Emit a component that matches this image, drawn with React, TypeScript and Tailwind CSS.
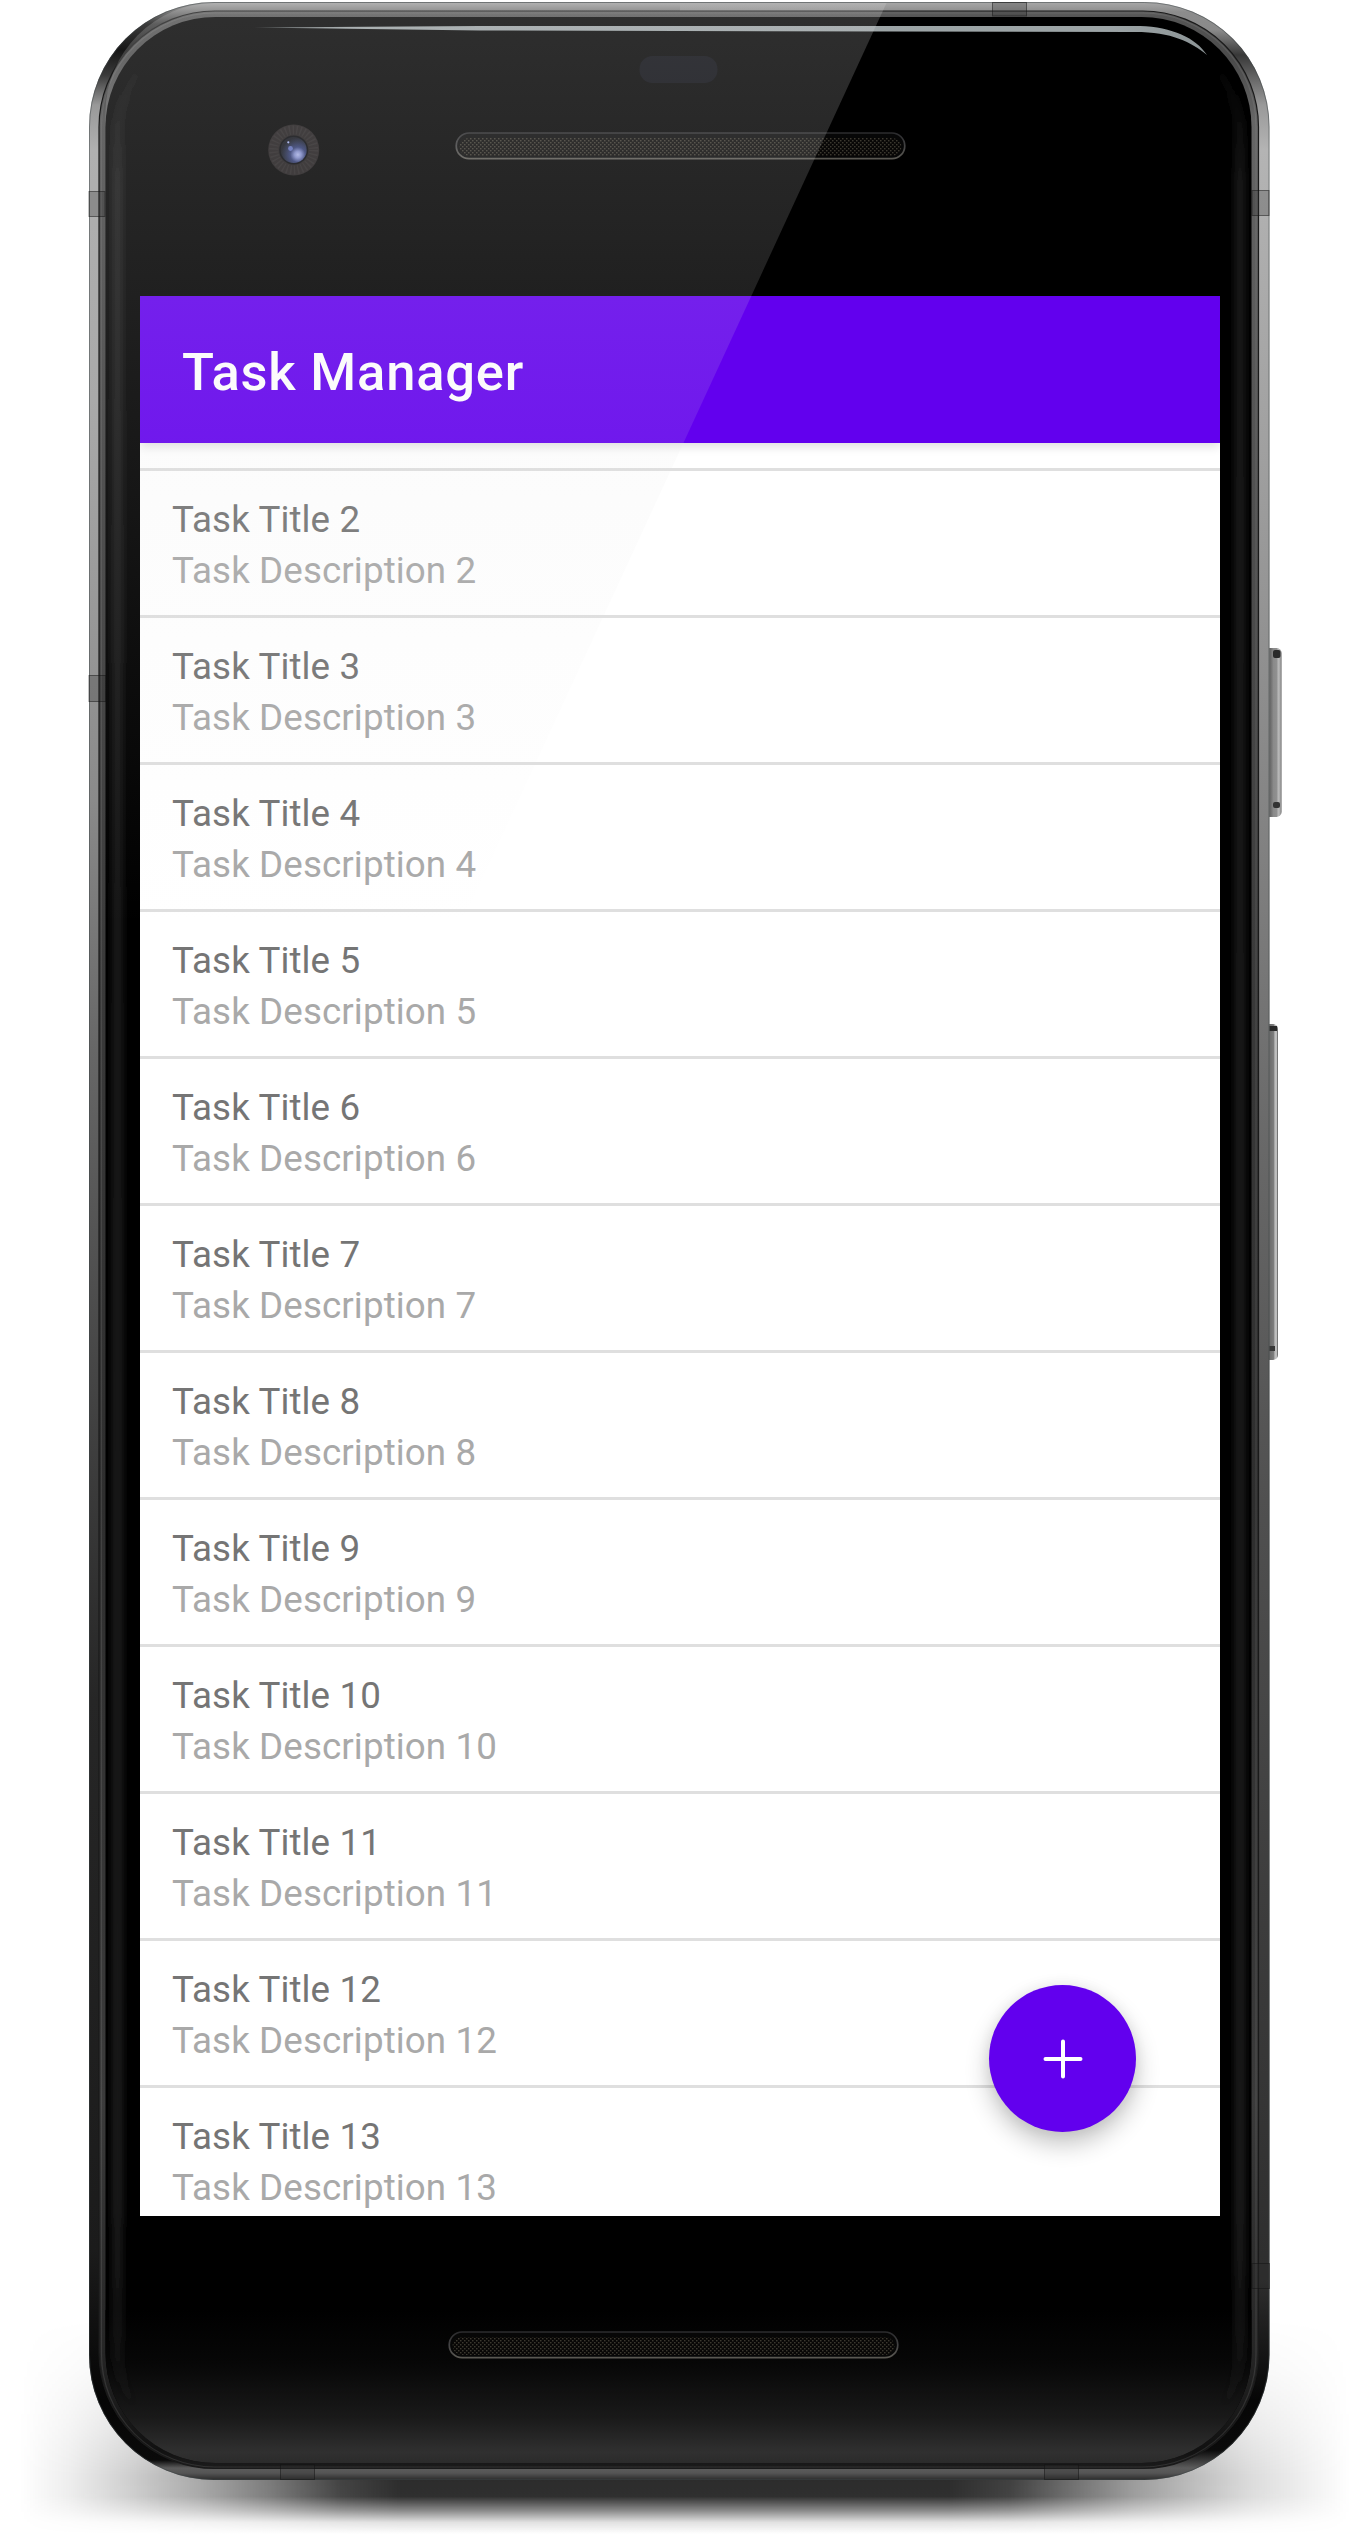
const tasks = Array.from({ length: 12 }, (_, i) => i + 2);

function Stops({ items }: { items: [number, string, number?][] }) {
  return (
    <>
      {items.map(([offset, color, opacity], i) => (
        <stop key={i} offset={offset} stopColor={color} stopOpacity={opacity ?? 1} />
      ))}
    </>
  );
}

const yStops = (list: [number, string, number?][]): [number, string, number?][] =>
  list.map(([y, c, o]) => [y / 2534, c, o]);
const xStops = (list: [number, number][]): [number, string, number?][] =>
  list.map(([x, o]) => [x / 1370, "#000", o]);

function Grille({ x, y }: { x: number; y: number }) {
  return (
    <g>
      <rect x={x + 0.75} y={y + 0.5} width="448.5" height="25.7" rx="12.8" fill="#070707" stroke="url(#grilleEdge)" strokeWidth="1.7" />
      <rect x={x + 4} y={y + 5.5} width="442" height="18" rx="9" fill="url(#mesh)" />
    </g>
  );
}

function PhoneBody() {
  return (
    <svg className="absolute inset-0" width="1370" height="2534" viewBox="0 0 1370 2534" aria-hidden="true">
      <defs>
        <linearGradient id="leftMetal" gradientUnits="userSpaceOnUse" x1="0" y1="0" x2="0" y2="2534">
          <Stops items={yStops([[2, "#a8a8a8"], [8, "#8c8c8c"], [24, "#3c3c3c"], [50, "#161616"], [75, "#3a3a3a"], [105, "#999"], [150, "#b0b0b0"], [400, "#a9a9a9"], [800, "#8a8a8a"], [1050, "#676767"], [1350, "#484848"], [1700, "#262626"], [2250, "#1b1b1b"], [2400, "#050505"], [2460, "#0a0a0a"], [2468, "#5c5c5c"], [2473, "#555"], [2480, "#2b2b2b"]])} />
        </linearGradient>
        <linearGradient id="rightMetal" gradientUnits="userSpaceOnUse" x1="0" y1="0" x2="0" y2="2534">
          <Stops items={yStops([[2, "#a8a8a8"], [12, "#8c8c8c"], [30, "#8a8a8a"], [55, "#383838"], [75, "#606060"], [105, "#999"], [150, "#b4b4b4"], [450, "#a0a0a0"], [800, "#858585"], [1150, "#686868"], [1500, "#505050"], [1900, "#3d3d3d"], [2280, "#2e2e2e"], [2400, "#060606"], [2450, "#0a0a0a"], [2468, "#5c5c5c"], [2473, "#555"], [2480, "#2b2b2b"]])} />
        </linearGradient>
        <linearGradient id="rim" gradientUnits="userSpaceOnUse" x1="0" y1="0" x2="0" y2="2534">
          <Stops items={yStops([[10, "#606060"], [17, "#555"], [60, "#4a4a4a"], [120, "#666"], [500, "#505050"], [1000, "#393939"], [1500, "#2e2e2e"], [2100, "#3b3b3b"], [2350, "#262626"], [2450, "#111"], [2468, "#1c1c1c"]])} />
        </linearGradient>
        <linearGradient id="sheen" gradientUnits="userSpaceOnUse" x1="0" y1="0" x2="0" y2="2534">
          <Stops items={yStops([[60, "#2a2a2a", 0], [190, "#2a2a2a", 0.9], [2200, "#2a2a2a", 1], [2340, "#2a2a2a", 0.6], [2410, "#2a2a2a", 0]])} />
        </linearGradient>
        <linearGradient id="chin" gradientUnits="userSpaceOnUse" x1="0" y1="2310" x2="0" y2="2463">
          <Stops items={[[0, "#000"], [0.35, "#070707"], [0.7, "#191919"], [0.93, "#303030"], [1, "#2b2b2b"]]} />
        </linearGradient>
        <linearGradient id="shadowX" gradientUnits="userSpaceOnUse" x1="0" y1="0" x2="1370" y2="0">
          <Stops items={xStops([[20, 0], [70, 0.07], [130, 0.19], [200, 0.34], [270, 0.52], [340, 0.74], [400, 0.83], [950, 0.83], [1010, 0.75], [1060, 0.6], [1130, 0.4], [1180, 0.29], [1250, 0.14], [1350, 0]])} />
        </linearGradient>
        <linearGradient id="shadowY" gradientUnits="userSpaceOnUse" x1="0" y1="2300" x2="0" y2="2534">
          <Stops items={[[0.08, "#fff", 0], [0.3, "#fff", 0.2], [0.55, "#fff", 0.6], [0.75, "#fff", 1], [0.84, "#fff", 0.98], [0.9, "#fff", 0.55], [0.95, "#fff", 0.14], [1, "#fff", 0]]} />
        </linearGradient>
        <mask id="shadowMask" maskUnits="userSpaceOnUse" x="0" y="2300" width="1370" height="234">
          <rect y="2300" width="1370" height="234" fill="url(#shadowY)" />
        </mask>
        <linearGradient id="grilleEdge" x1="0" y1="0" x2="0" y2="1">
          <Stops items={[[0, "#2b2b2d"], [0.5, "#434344"], [1, "#5a5852"]]} />
        </linearGradient>
        <pattern id="mesh" width="4" height="4" patternUnits="userSpaceOnUse">
          <rect width="4" height="4" fill="#080706" />
          <rect x="0" y="0" width="1.5" height="1.4" fill="#3b382f" />
          <rect x="2" y="2" width="1.5" height="1.4" fill="#3b382f" />
        </pattern>
        <radialGradient id="lens" cx="0.66" cy="0.68" r="0.65">
          <Stops items={[[0, "#aab3e6"], [0.2, "#7f8ac8"], [0.45, "#2f3a70"], [0.8, "#1c2238"], [1, "#12141c"]]} />
        </radialGradient>
        <linearGradient id="strip" x1="0" y1="0" x2="1" y2="0">
          <Stops items={[[0, "#8b9597", 0.6], [0.1, "#9da5a7"], [0.9, "#9ca4a6"], [1, "#8c9496"]]} />
        </linearGradient>
        <linearGradient id="powerKey" gradientUnits="userSpaceOnUse" x1="1269" y1="0" x2="1281.5" y2="0">
          <Stops items={[[0, "#5c5c5c"], [0.25, "#7c7c7c"], [0.35, "#8a8a8a"], [0.6, "#909090"], [0.75, "#b8b8b8"], [0.9, "#a8a8a8"], [1, "#555"]]} />
        </linearGradient>
        <linearGradient id="volumeKey" gradientUnits="userSpaceOnUse" x1="1269" y1="0" x2="1278" y2="0">
          <Stops items={[[0, "#6a6a6a"], [0.5, "#7c7c7c"], [0.68, "#c0c0c0"], [0.85, "#bcbcbc"], [1, "#4a4a4a"]]} />
        </linearGradient>
        <filter id="soft" x="-20%" y="-5%" width="140%" height="110%">
          <feGaussianBlur stdDeviation="4" />
        </filter>
        <clipPath id="leftHalf"><rect x="0" y="0" width="680" height="2534" /></clipPath>
        <clipPath id="rightHalf"><rect x="680" y="0" width="690" height="2534" /></clipPath>
        <clipPath id="glass"><rect x="105.5" y="17" width="1146" height="2446" rx="110" /></clipPath>
      </defs>

      <rect y="2300" width="1370" height="234" fill="url(#shadowX)" mask="url(#shadowMask)" />

      <rect x="1262" y="648" width="19.5" height="169" rx="5" fill="url(#powerKey)" />
      <rect x="1273" y="650" width="7.5" height="8" rx="2" fill="#2a2a2a" />
      <rect x="1273" y="802" width="7" height="6" rx="2" fill="#333" />
      <rect x="1262" y="1024" width="16" height="336" rx="5" fill="url(#volumeKey)" />
      <rect x="1268" y="1026" width="9" height="5" fill="#2a2a2a" />
      <rect x="1268" y="1346" width="7" height="5" fill="#383838" />

      <rect x="89" y="2" width="1180.5" height="2478" rx="125" fill="url(#leftMetal)" clipPath="url(#leftHalf)" />
      <rect x="89" y="2" width="1180.5" height="2478" rx="125" fill="url(#rightMetal)" clipPath="url(#rightHalf)" />
      <rect x="89.5" y="2.5" width="1179.5" height="2477" rx="124.5" fill="none" stroke="#3b4446" strokeOpacity="0.5" />
      <rect x="99" y="11" width="1159.5" height="2457.5" rx="116" fill="url(#rim)" stroke="#1a1a1a" strokeWidth="1.2" />
      <rect x="101.5" y="13" width="1154.5" height="2454" rx="113" fill="none" stroke="#aaa" strokeOpacity="0.16" strokeWidth="1.2" />

      <g fill="#2a2a2a" fillOpacity="0.26" stroke="#111" strokeOpacity="0.5">
        <rect x="89" y="191.5" width="16" height="25" />
        <rect x="89" y="675.5" width="17" height="26" />
        <rect x="1252" y="190.5" width="17" height="25" />
        <rect x="1252" y="2263.5" width="17.5" height="25" />
        <rect x="992.5" y="2.5" width="34" height="13.5" />
        <rect x="280.5" y="2464.5" width="34" height="15" />
        <rect x="1044.5" y="2464.5" width="34" height="15" />
      </g>

      <rect x="105.5" y="17" width="1146" height="2446" rx="110" fill="#000" />
      <g clipPath="url(#glass)">
        <rect x="105" y="2310" width="1147" height="153" fill="url(#chin)" />
        <rect x="117.5" y="34" width="1122.5" height="2416" rx="100" fill="none" stroke="url(#sheen)" strokeWidth="7" filter="url(#soft)" />
      </g>

      <path d="M250 27.5 L480 26 L1140 26 C1172 27 1196 38 1207 55 C1191 42 1172 32 1135 32 L480 30.5 Z" fill="url(#strip)" />
      <rect x="639.5" y="56" width="78" height="27" rx="13" fill="#08090f" />
      <Grille x={455.5} y={132.5} />
      <Grille x={448.5} y={2331.5} />
      <circle cx="293.7" cy="150" r="25.5" fill="#1f1b1c" />
      <circle cx="293.7" cy="150" r="20" fill="none" stroke="#3a3637" strokeWidth="9" strokeDasharray="1.5 2.2" strokeOpacity="0.35" />
      <circle cx="293.7" cy="150" r="14.5" fill="#05060a" />
      <circle cx="293.7" cy="150" r="13" fill="url(#lens)" />
      <circle cx="290.5" cy="148.5" r="2.4" fill="#6b7cd0" fillOpacity="0.8" />
      <circle cx="288.3" cy="142.3" r="1.1" fill="#a7b4f2" />
    </svg>
  );
}

function Glare() {
  return (
    <svg className="pointer-events-none absolute inset-0" width="1370" height="2534" viewBox="0 0 1370 2534" aria-hidden="true">
      <defs>
        <linearGradient id="glare" gradientUnits="userSpaceOnUse" x1="0" y1="0" x2="0" y2="927">
          <Stops items={[[0, "#e0e0e0", 0.21], [1, "#e0e0e0", 0]]} />
        </linearGradient>
        <clipPath id="glareArea"><rect x="105.5" y="3" width="1146" height="2460" rx="110" /></clipPath>
      </defs>
      <path d="M105 3 H886.5 L460 927 H105 Z" fill="url(#glare)" clipPath="url(#glareArea)" />
    </svg>
  );
}

function TaskRow({ n }: { n: number }) {
  return (
    <li className="h-[147px] shrink-0 border-b-[3px] border-[#dfdfdf] px-8 pt-[23px] text-[36.75px] leading-[51px] tracking-[0.1px]">
      <p className="text-[#757575]">Task Title {n}</p>
      <p className="text-[#a9a9a9]">Task Description {n}</p>
    </li>
  );
}

export default function App() {
  return (
    <div className="relative h-[2534px] w-[1370px] overflow-hidden bg-white font-[Roboto,sans-serif]">
      <PhoneBody />
      <main className="relative isolate ml-[140px] mt-[296px] flex h-[1920px] w-[1080px] flex-col overflow-hidden bg-white">
        <header className="z-10 flex h-[147px] shrink-0 items-center bg-[#6200ee] px-[42px] pt-[5px] shadow-[0_3px_10px_rgba(0,0,0,0.14)]">
          <h1 className="text-[52.5px] font-medium leading-none tracking-[0.8px] text-white">Task Manager</h1>
        </header>
        <ul className="flex flex-col">
          <li className="h-7 shrink-0 border-b-[3px] border-[#dfdfdf]" />
          {tasks.map((n) => (
            <TaskRow key={n} n={n} />
          ))}
        </ul>
        <button
          aria-label="Add task"
          className="absolute bottom-[84px] right-[84px] flex size-[147px] items-center justify-center rounded-full bg-[#6200ee] shadow-[0_12px_24px_rgba(0,0,0,0.24),0_0_14px_rgba(0,0,0,0.06)]"
        >
          <svg width="40" height="40" viewBox="0 0 40 40" fill="none" stroke="#fff" strokeWidth="4" strokeLinecap="round">
            <path d="M20 2.5v35M2.5 20h35" />
          </svg>
        </button>
      </main>
      <Glare />
    </div>
  );
}
